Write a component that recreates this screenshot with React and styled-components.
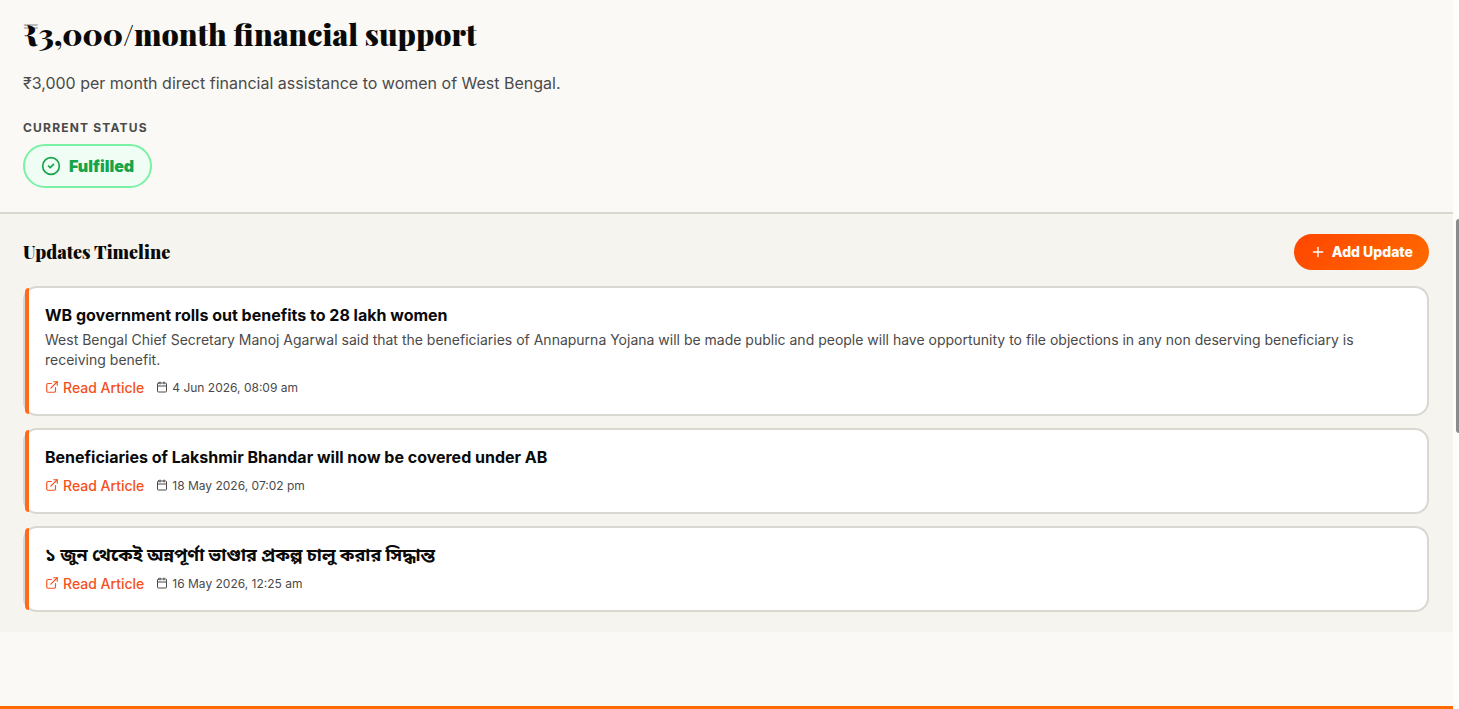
import React from 'react';
import styled, { createGlobalStyle } from 'styled-components';
import { Calendar, CircleCheck, ExternalLink, Plus } from 'lucide-react';

const GlobalStyle = createGlobalStyle`
  * {
    box-sizing: border-box;
  }
  body {
    margin: 0;
    background: #fdfdfc;
    color: #0a0a0a;
    font-family: Inter, 'Noto Sans Bengali', 'Noto Sans', sans-serif;
  }
  h1, h2, h3, p, ul {
    margin: 0;
    padding: 0;
  }
`;

const Screen = styled.div`
  display: flex;
  min-height: 100vh;
`;

const Page = styled.div`
  flex: 1;
  min-width: 0;
  display: flex;
  flex-direction: column;
  background: #faf9f5;
`;

const Main = styled.main`
  flex: 1;
`;

const Summary = styled.section`
  padding: 12px 24px 24px 23px;
  border-bottom: 2px solid #d9d8d0;
`;

const PageTitle = styled.h1`
  font-family: 'Playfair Display', 'Liberation Serif', serif;
  font-size: 30px;
  font-weight: 900;
  line-height: 44px;
`;

const Lead = styled.p`
  margin-top: 14px;
  font-size: 16px;
  line-height: 26px;
  color: #4a4a4a;
`;

const StatusLabel = styled.p`
  margin: 24px 0 8px;
  font-size: 12px;
  font-weight: 700;
  line-height: 16px;
  letter-spacing: 0.1em;
  text-transform: uppercase;
  color: #4a4a4a;
`;

const StatusPill = styled.span`
  display: inline-flex;
  align-items: center;
  gap: 8px;
  height: 44px;
  padding: 0 16px;
  border: 2px solid #7bf1a8;
  border-radius: 22px;
  background: #f0fdf4;
  color: #16a34a;
  font-size: 16px;
  font-weight: 900;
  vertical-align: top;
`;

const Timeline = styled.section`
  padding: 20px 24px 20px 23px;
  background: #f5f4ef;
`;

const TimelineHeader = styled.div`
  display: flex;
  align-items: center;
  justify-content: space-between;
  margin-bottom: 16px;
`;

const SectionTitle = styled.h2`
  font-family: 'Playfair Display', 'Liberation Serif', serif;
  font-size: 18px;
  font-weight: 900;
  line-height: 28px;
`;

const AddButton = styled.button`
  display: flex;
  align-items: center;
  gap: 6px;
  height: 36px;
  padding: 0 16px;
  border: 0;
  border-radius: 18px;
  background: linear-gradient(135deg, #ff4500, #ff6b00);
  color: #fff;
  font: 800 14px/20px Inter, sans-serif;
  cursor: pointer;
`;

const UpdateList = styled.ul`
  display: flex;
  flex-direction: column;
  gap: 12px;
  list-style: none;
`;

const UpdateCard = styled.li`
  display: flex;
  border: 2px solid #d9d8d0;
  border-radius: 14px;
  background: #fff;

  &::before {
    content: '';
    flex: none;
    width: 4px;
    border-radius: 4px 0 0 4px;
    background: #ff6b1a;
  }
`;

const CardBody = styled.div`
  flex: 1;
  min-width: 0;
  padding: 16px;
`;

const CardTitle = styled.h3`
  font-size: 16px;
  font-weight: 700;
  line-height: 22px;

  &:lang(bn) {
    font-size: 18px;
  }
`;

const CardText = styled.p`
  margin-top: 4px;
  font-size: 14px;
  line-height: 20px;
  color: #4a4a4a;
`;

const Meta = styled.div`
  display: flex;
  align-items: center;
  gap: 12px;
  margin-top: 6px;
  height: 22px;
`;

const ArticleLink = styled.a`
  display: flex;
  align-items: center;
  gap: 4px;
  color: #f4511e;
  font-size: 14px;
  font-weight: 500;
  text-decoration: none;
`;

const Posted = styled.time`
  display: flex;
  align-items: center;
  gap: 4px;
  color: #4a4a4a;
  font-size: 12px;
`;

const Footer = styled.footer`
  border-top: 3px solid #ff6b00;
`;

const ScrollTrack = styled.div`
  flex: none;
  width: 6px;
  padding: 219px 0 0 3px;
`;

const ScrollThumb = styled.div`
  height: 214px;
  border-radius: 3px 0 0 3px;
  background: #8b8b8b;
`;

const updates = [
  {
    title: 'WB government rolls out benefits to 28 lakh women',
    text: 'West Bengal Chief Secretary Manoj Agarwal said that the beneficiaries of Annapurna Yojana will be made public and people will have opportunity to file objections in any non deserving beneficiary is receiving benefit.',
    date: '4 Jun 2026, 08:09 am',
  },
  {
    title: 'Beneficiaries of Lakshmir Bhandar will now be covered under AB',
    date: '18 May 2026, 07:02 pm',
  },
  {
    title: '১ জুন থেকেই অন্নপূর্ণা ভাণ্ডার প্রকল্প চালু করার সিদ্ধান্ত',
    lang: 'bn',
    date: '16 May 2026, 12:25 am',
  },
];

const Update = ({ title, text, lang, date }) => (
  <UpdateCard>
    <CardBody>
      <CardTitle lang={lang}>{title}</CardTitle>
      {text && <CardText>{text}</CardText>}
      <Meta>
        <ArticleLink href="#">
          <ExternalLink size={14} />
          Read Article
        </ArticleLink>
        <Posted>
          <Calendar size={12} />
          {date}
        </Posted>
      </Meta>
    </CardBody>
  </UpdateCard>
);

const App = () => {
  return (
    <>
      <GlobalStyle />
      <Screen>
        <Page>
          <Main>
            <Summary>
              <PageTitle>₹3,000/month financial support</PageTitle>
              <Lead>₹3,000 per month direct financial assistance to women of West Bengal.</Lead>
              <StatusLabel>Current Status</StatusLabel>
              <StatusPill>
                <CircleCheck size={20} />
                Fulfilled
              </StatusPill>
            </Summary>
            <Timeline>
              <TimelineHeader>
                <SectionTitle>Updates Timeline</SectionTitle>
                <AddButton type="button">
                  <Plus size={16} />
                  Add Update
                </AddButton>
              </TimelineHeader>
              <UpdateList>
                {updates.map((item) => (
                  <Update key={item.date} {...item} />
                ))}
              </UpdateList>
            </Timeline>
          </Main>
          <Footer />
        </Page>
        <ScrollTrack>
          <ScrollThumb />
        </ScrollTrack>
      </Screen>
    </>
  );
};

export default App;
